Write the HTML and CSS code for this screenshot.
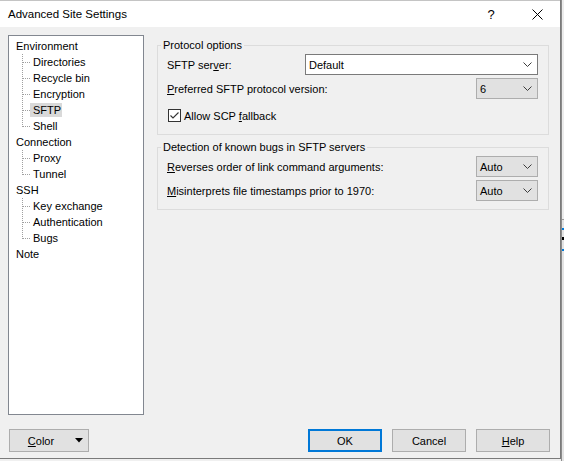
FILE: index.html
```html
<!DOCTYPE html>
<html>
<head>
<meta charset="utf-8">
<title>Advanced Site Settings</title>
<link rel="stylesheet" href="styles.css">
</head>
<body>
<div class="screen">
  <div class="window">
    <div class="titlebar">
      <div class="title">Advanced Site Settings</div>
      <div class="caption-btn help-glyph">?</div>
      <div class="caption-btn">
        <svg width="11" height="11" viewBox="0 0 11 11"><path d="M0.5 0.5L10.5 10.5M10.5 0.5L0.5 10.5" stroke="#000" stroke-width="1" fill="none"/></svg>
      </div>
    </div>
    <div class="client">
      <div class="main">
        <div class="tree">
          <div class="node"><span class="label">Environment</span></div>
          <div class="node child"><span class="conn"></span><span class="label">Directories</span></div>
          <div class="node child"><span class="conn"></span><span class="label">Recycle bin</span></div>
          <div class="node child"><span class="conn"></span><span class="label">Encryption</span></div>
          <div class="node child"><span class="conn"></span><span class="label selected">SFTP</span></div>
          <div class="node child last"><span class="conn"></span><span class="label">Shell</span></div>
          <div class="node"><span class="label">Connection</span></div>
          <div class="node child"><span class="conn"></span><span class="label">Proxy</span></div>
          <div class="node child last"><span class="conn"></span><span class="label">Tunnel</span></div>
          <div class="node"><span class="label">SSH</span></div>
          <div class="node child"><span class="conn"></span><span class="label">Key exchange</span></div>
          <div class="node child"><span class="conn"></span><span class="label">Authentication</span></div>
          <div class="node child last"><span class="conn"></span><span class="label">Bugs</span></div>
          <div class="node"><span class="label">Note</span></div>
        </div>
        <div class="pane">
          <fieldset class="group">
            <legend>Protocol options</legend>
            <div class="gbody first">
              <div class="row">
                <span class="lbl">SFTP ser<u>v</u>er:</span>
                <div class="combo edit wide"><span class="val">Default</span><svg class="chev" width="9" height="5" viewBox="0 0 9 5"><path d="M0.5 0.5L4.5 4.5L8.5 0.5" stroke="#3c3c3c" stroke-width="1" fill="none"/></svg></div>
              </div>
              <div class="row">
                <span class="lbl"><u>P</u>referred SFTP protocol version:</span>
                <div class="combo small"><span class="val">6</span><svg class="chev" width="9" height="5" viewBox="0 0 9 5"><path d="M0.5 0.5L4.5 4.5L8.5 0.5" stroke="#3c3c3c" stroke-width="1" fill="none"/></svg></div>
              </div>
              <div class="row check-row">
                <svg class="checkbox" width="13" height="13" viewBox="0 0 13 13"><rect x="0.5" y="0.5" width="12" height="12" fill="#fff" stroke="#333"/><path d="M2.5 6.5L5 9L10.5 3.5" stroke="#333" stroke-width="1.1" fill="none"/></svg>
                <span class="lbl">Allow SCP <u>f</u>allback</span>
              </div>
            </div>
          </fieldset>
          <fieldset class="group second">
            <legend>Detection of known bugs in SFTP servers</legend>
            <div class="gbody">
              <div class="row">
                <span class="lbl"><u>R</u>everses order of link command arguments:</span>
                <div class="combo small"><span class="val">Auto</span><svg class="chev" width="9" height="5" viewBox="0 0 9 5"><path d="M0.5 0.5L4.5 4.5L8.5 0.5" stroke="#3c3c3c" stroke-width="1" fill="none"/></svg></div>
              </div>
              <div class="row">
                <span class="lbl"><u>M</u>isinterprets file timestamps prior to 1970:</span>
                <div class="combo small"><span class="val">Auto</span><svg class="chev" width="9" height="5" viewBox="0 0 9 5"><path d="M0.5 0.5L4.5 4.5L8.5 0.5" stroke="#3c3c3c" stroke-width="1" fill="none"/></svg></div>
              </div>
            </div>
          </fieldset>
        </div>
      </div>
      <div class="footer">
        <div class="btn color-btn"><span class="btn-text"><u>C</u>olor</span><svg class="tri" width="8" height="5" viewBox="0 0 8 5"><path d="M0 0H8L4 4.5Z" fill="#000"/></svg></div>
        <div class="spacer"></div>
        <div class="btn default">OK</div>
        <div class="btn">Cancel</div>
        <div class="btn"><u>H</u>elp</div>
      </div>
    </div>
  </div>
  <div class="behind"></div>
</div>
</body>
</html>
```

FILE: styles.css
```css
html, body {
  margin: 0;
  padding: 0;
}
body {
  background: #f0f0f0;
  font-family: "Liberation Sans", Arial, sans-serif;
  font-size: 11px;
  color: #000;
}
.screen {
  display: flex;
  width: 564px;
  height: 461px;
  overflow: hidden;
  align-items: flex-start;
}
.window {
  flex: none;
  width: 560px;
  height: 458px;
  border-right: 1px solid #7a7a7a;
  border-bottom: 1px solid #7a7a7a;
  box-sizing: content-box;
  background: #f0f0f0;
  display: flex;
  flex-direction: column;
}
.titlebar {
  height: 27px;
  border-top: 1px solid #c4c4c4;
  box-sizing: border-box;
  background: #fff;
  display: flex;
  align-items: center;
  flex: none;
}
.title {
  flex: 1;
  padding-left: 8px;
  font-size: 11.5px;
  padding-bottom: 1px;
}
.caption-btn {
  width: 46px;
  height: 26px;
  display: flex;
  align-items: center;
  justify-content: center;
}
.help-glyph {
  font-size: 13px;
}
.client {
  flex: 1;
  display: flex;
  flex-direction: column;
}
.main {
  flex: 1;
  display: flex;
  padding: 8px 0 0 8px;
}
.tree {
  width: 136px;
  height: 380px;
  box-sizing: border-box;
  border: 1px solid #828790;
  background: #fff;
  padding: 2px 0 0 6px;
  flex: none;
}
.node {
  height: 16px;
  display: flex;
  align-items: center;
  line-height: 14px;
}
.conn {
  width: 8px;
  height: 16px;
  margin-left: 7px;
  flex: none;
  background-image:
    repeating-linear-gradient(to bottom, #a0a0a0 0 1px, transparent 1px 2px),
    repeating-linear-gradient(to right, #a0a0a0 0 1px, transparent 1px 2px);
  background-size: 1px 16px, 7px 1px;
  background-position: 0 0, 1px 8px;
  background-repeat: no-repeat;
}
.child.last .conn {
  background-size: 1px 9px, 7px 1px;
}
.label {
  padding: 0 1px;
  height: 14px;
}
.child .label {
  padding-left: 3px;
}
.label.selected {
  background: #d9d9d9;
}
.pane {
  margin-left: 13px;
  padding-top: 3px;
  width: 392px;
  flex: none;
}
.group {
  margin: 0;
  padding: 0;
  border: 1px solid #dcdcdc;
  min-width: 0;
  box-sizing: border-box;
  width: 392px;
}
.group.second {
  margin-top: 5px;
}
.group legend {
  margin-left: 3px;
  padding: 0 2px;
  line-height: 15px;
}
.gbody {
  display: flex;
  flex-direction: column;
  gap: 3px;
  padding: 1px 10px 8px 9px;
}
.gbody.first {
  padding-bottom: 11px;
}
.row {
  display: flex;
  align-items: center;
  justify-content: space-between;
  height: 21px;
}
.check-row {
  justify-content: flex-start;
  height: 15px;
  margin-top: 6px;
}
.checkbox {
  margin-left: 1px;
  margin-right: 3px;
  flex: none;
}
.combo {
  height: 21px;
  box-sizing: border-box;
  border: 1px solid #adadad;
  background: #e1e1e1;
  display: flex;
  align-items: center;
  padding-left: 3px;
}
.combo.edit {
  background: #fff;
  border-color: #7a7a7a;
}
.combo.wide {
  width: 233px;
}
.combo.small {
  width: 62px;
}
.val {
  flex: 1;
}
.chev {
  margin-right: 5px;
  flex: none;
}
.footer {
  flex: none;
  height: 29px;
  box-sizing: border-box;
  display: flex;
  padding: 0 10px 6px 9px;
  gap: 10px;
}
.spacer {
  flex: 1;
}
.btn {
  width: 74px;
  height: 23px;
  box-sizing: border-box;
  border: 1px solid #adadad;
  background: #e1e1e1;
  display: flex;
  align-items: center;
  justify-content: center;
}
.btn.default {
  border: 2px solid #0078d7;
}
.color-btn {
  width: 80px;
  justify-content: flex-start;
}
.btn-text {
  width: 62px;
  text-align: center;
}
.tri {
  margin-left: 3px;
}
.behind {
  flex: none;
  width: 3px;
  height: 461px;
  border-left: 1px solid #8c8c8c;
  box-sizing: border-box;
  background:
    linear-gradient(to bottom, transparent 0 228px, #0078d7 228px 230px, transparent 230px 237px, #000 237px 240px, transparent 240px 249px, #0078d7 249px 251px, transparent 251px),
    linear-gradient(to bottom, #ececec 0 219px, #9a9a9a 219px 220px, #e3e3e3 220px);
}
```
